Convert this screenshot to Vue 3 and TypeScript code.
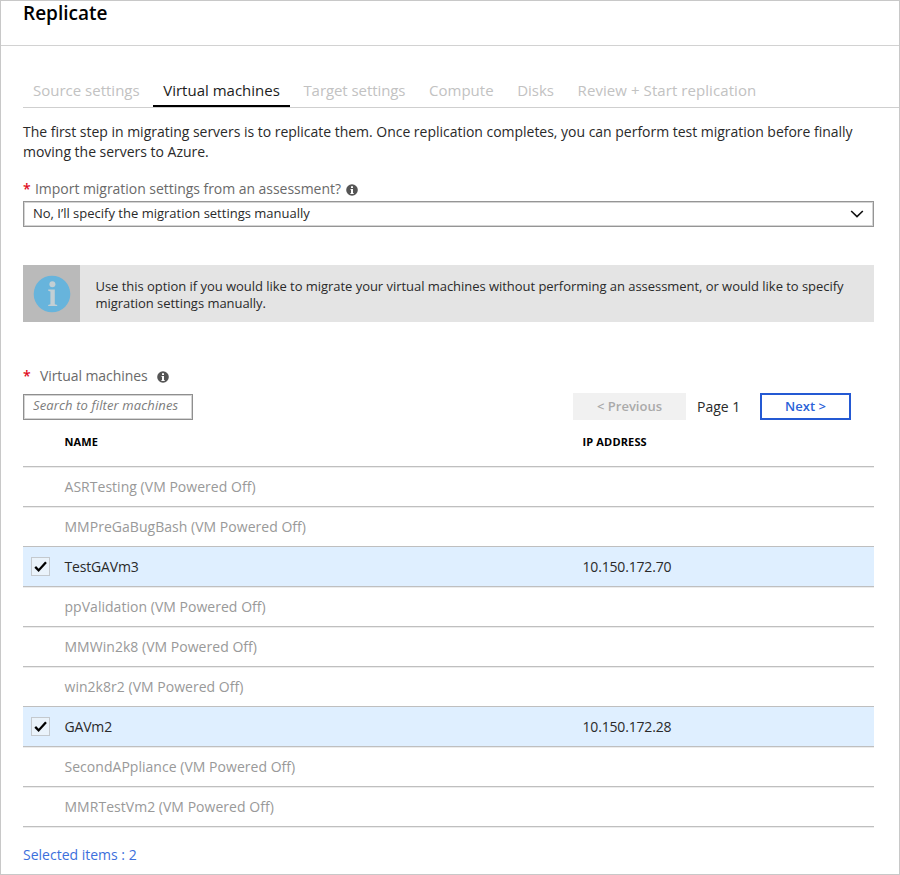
<script setup lang="ts">
import { computed, ref } from 'vue'

interface Machine {
  name: string
  ip: string
  poweredOff: boolean
  selected: boolean
}

const tabs: string[] = [
  'Source settings',
  'Virtual machines',
  'Target settings',
  'Compute',
  'Disks',
  'Review + Start replication',
]
const activeTab = 'Virtual machines'

const off = (name: string): Machine => ({ name, ip: '', poweredOff: true, selected: false })

const machines = ref<Machine[]>([
  off('ASRTesting'),
  off('MMPreGaBugBash'),
  { name: 'TestGAVm3', ip: '10.150.172.70', poweredOff: false, selected: true },
  off('ppValidation'),
  off('MMWin2k8'),
  off('win2k8r2'),
  { name: 'GAVm2', ip: '10.150.172.28', poweredOff: false, selected: true },
  off('SecondAPpliance'),
  off('MMRTestVm2'),
])

const search = ref('')
const selectedCount = computed(() => machines.value.filter((m) => m.selected).length)
</script>

<template>
  <div class="blade">
    <header class="blade-header">
      <h1>Replicate</h1>
    </header>

    <nav class="tabs">
      <span v-for="tab in tabs" :key="tab" class="tab" :class="{ active: tab === activeTab }">{{ tab }}</span>
    </nav>

    <main class="content">
      <p class="intro">
        The first step in migrating servers is to replicate them. Once replication completes, you can perform test migration before finally<br />moving the servers to Azure.
      </p>

      <div class="label">
        <span class="star">*</span>
        <span class="label-text">Import migration settings from an assessment?</span>
        <svg class="hint" viewBox="0 0 12 12">
          <circle cx="6" cy="6" r="5.8" fill="#555" />
          <path d="M5 2.2h2v1.7H5zM4.4 5H7v4h.7v.9H4.4V9H5V5.8h-.6z" fill="#fff" />
        </svg>
      </div>

      <div class="select">
        <span>No, I’ll specify the migration settings manually</span>
        <svg class="chevron" viewBox="0 0 14 8">
          <path d="M1.2 1 7 6.6 12.8 1" fill="none" stroke="#111" stroke-width="1.6" />
        </svg>
      </div>

      <div class="info">
        <div class="info-icon">
          <svg viewBox="0 0 38 38">
            <circle cx="19" cy="19" r="18.3" fill="#67b4dc" />
            <circle cx="19.4" cy="9.3" r="3" fill="#c3cfd4" />
            <path d="M15.2 14.6h6.6v14.6l2.4.7v1.2h-9v-1.2l2.2-.7V16.4l-2.2-.6z" fill="#c3cfd4" />
          </svg>
        </div>
        <p>
          Use this option if you would like to migrate your virtual machines without performing an assessment, or would like to specify<br />migration settings manually.
        </p>
      </div>

      <div class="label vm-label">
        <span class="star">*</span>
        <span class="label-text">Virtual machines</span>
        <svg class="hint" viewBox="0 0 12 12">
          <circle cx="6" cy="6" r="5.8" fill="#555" />
          <path d="M5 2.2h2v1.7H5zM4.4 5H7v4h.7v.9H4.4V9H5V5.8h-.6z" fill="#fff" />
        </svg>
      </div>

      <div class="toolbar">
        <input v-model="search" class="search" type="text" placeholder="Search to filter machines" />
        <div class="pager">
          <button class="btn prev" type="button" disabled>&lt; Previous</button>
          <span class="page">Page 1</span>
          <button class="btn next" type="button">Next &gt;</button>
        </div>
      </div>

      <div class="grid">
        <div class="row head">
          <span></span>
          <span>NAME</span>
          <span>IP ADDRESS</span>
        </div>
        <div
          v-for="m in machines"
          :key="m.name"
          class="row"
          :class="{ selected: m.selected, off: m.poweredOff }"
        >
          <span class="check-cell">
            <span v-if="m.selected" class="check">
              <svg viewBox="0 0 17 17">
                <path d="M3.2 8.9 6.6 12.4 14 4.2" fill="none" stroke="#000" stroke-width="2.3" />
              </svg>
            </span>
          </span>
          <span>{{ m.name }}{{ m.poweredOff ? ' (VM Powered Off)' : '' }}</span>
          <span>{{ m.ip }}</span>
        </div>
      </div>

      <div class="summary">Selected items : {{ selectedCount }}</div>
    </main>
  </div>
</template>

<style>
body {
  background: #fff;
}
</style>

<style scoped>
* {
  box-sizing: border-box;
}

.blade {
  width: 900px;
  height: 875px;
  border: 1px solid #c8c8c8;
  overflow: hidden;
  background: #fff;
  color: #2a2a2a;
  font-family: "Open Sans", "Noto Sans", sans-serif;
  font-size: 14px;
  font-weight: 400;
  white-space: nowrap;
}

.blade-header {
  height: 45px;
  border-bottom: 1px solid #d2d2d2;
  padding-left: 22px;
}

h1 {
  margin: 0;
  font-size: 19px;
  font-weight: 600;
  line-height: 24px;
  color: #000;
}

.tabs {
  display: flex;
  margin-left: 22px;
  height: 62px;
  padding-top: 28px;
  border-bottom: 1px solid #cfcfcf;
}

.tab {
  height: 33px;
  padding: 0 10px;
  margin-right: 3.6px;
  font-size: 15px;
  line-height: 33px;
  color: #c2c2c2;
}

.tab:nth-child(3) {
  letter-spacing: -0.07px;
}

.tab:last-child {
  letter-spacing: 0.07px;
}

.tab.active {
  color: #1c1c1c;
  border-bottom: 2px solid #000;
}

.content {
  padding: 14px 25.5px 0 22px;
}

.intro {
  margin: 0;
  line-height: 20px;
  letter-spacing: -0.02px;
}

.label {
  display: flex;
  align-items: center;
  height: 20px;
  margin-top: 16px;
  color: #6a6a6a;
  letter-spacing: -0.04px;
}

.star {
  width: 12px;
  color: #e00b1c;
  font-weight: 600;
}

.hint {
  width: 12px;
  height: 12px;
  margin: 3px 0 0 5px;
}

.select {
  display: flex;
  align-items: center;
  justify-content: space-between;
  height: 26px;
  margin-top: 3px;
  padding: 0 9px;
  border: 1px solid #959595;
  box-shadow: inset 0 0 0 1px #d4d4d4;
  font-size: 13px;
}

.select span {
  padding-bottom: 2px;
}

.chevron {
  width: 14px;
  height: 8px;
}

.info {
  display: flex;
  height: 57px;
  margin-top: 38px;
  background: #e4e4e4;
}

.info-icon {
  display: flex;
  align-items: center;
  justify-content: center;
  width: 57px;
  background: #bababa;
}

.info-icon svg {
  width: 38px;
  height: 38px;
}

.info p {
  margin: 0;
  padding: 13px 0 0 15.5px;
  font-size: 13px;
  line-height: 17px;
  letter-spacing: -0.04px;
}

.vm-label {
  margin-top: 43px;
  letter-spacing: -0.08px;
}

.vm-label .star {
  width: 17px;
}

.vm-label .hint {
  margin-top: 4px;
  margin-left: 9px;
}

.toolbar {
  display: flex;
  justify-content: space-between;
  align-items: center;
  height: 27px;
  margin-top: 8px;
  padding-right: 22.5px;
}

.search {
  width: 170px;
  height: 26px;
  padding: 0 9px 3px;
  border: 1px solid #8f8f8f;
  box-shadow: inset 0 0 0 1px #d4d4d4;
  border-radius: 0;
  background: #fff;
  font: italic 400 13px "Open Sans", "Noto Sans", sans-serif;
  letter-spacing: 0.13px;
}

.search::placeholder {
  color: #7c7c7c;
  opacity: 1;
}

.pager {
  display: flex;
  align-items: center;
}

.btn {
  height: 27px;
  padding: 0 0 1px;
  border: 0;
  font: 600 13px "Open Sans", "Noto Sans", sans-serif;
}

.prev {
  width: 113px;
  background: #f1f1f1;
  color: #aaa;
}

.page {
  width: 74px;
  padding-left: 11px;
}

.next {
  width: 91px;
  border: 2px solid #2459d3;
  background: #fff;
  color: #2a62d8;
}

.row {
  display: grid;
  grid-template-columns: 41.5px 518px 1fr;
  align-items: center;
  height: 40px;
  border-bottom: 1px solid #bfbfbf;
  box-shadow: 0 1px 0 #ececec;
}

.row.head {
  height: 47px;
  padding-bottom: 3px;
  font-size: 11px;
  font-weight: 700;
  color: #000;
  letter-spacing: 0.15px;
}

.row.off {
  color: #999;
  letter-spacing: 0.03px;
}

.row.selected {
  background: #dfefff;
  letter-spacing: -0.17px;
}

.check-cell {
  padding-left: 8px;
}

.check {
  display: block;
  width: 19px;
  height: 19px;
  border: 1px solid #c4c9ce;
  background: #eaf3fb;
}

.check svg {
  display: block;
  width: 17px;
  height: 17px;
}

.summary {
  margin-top: 18px;
  line-height: 20px;
  color: #3c6fdc;
}
</style>
